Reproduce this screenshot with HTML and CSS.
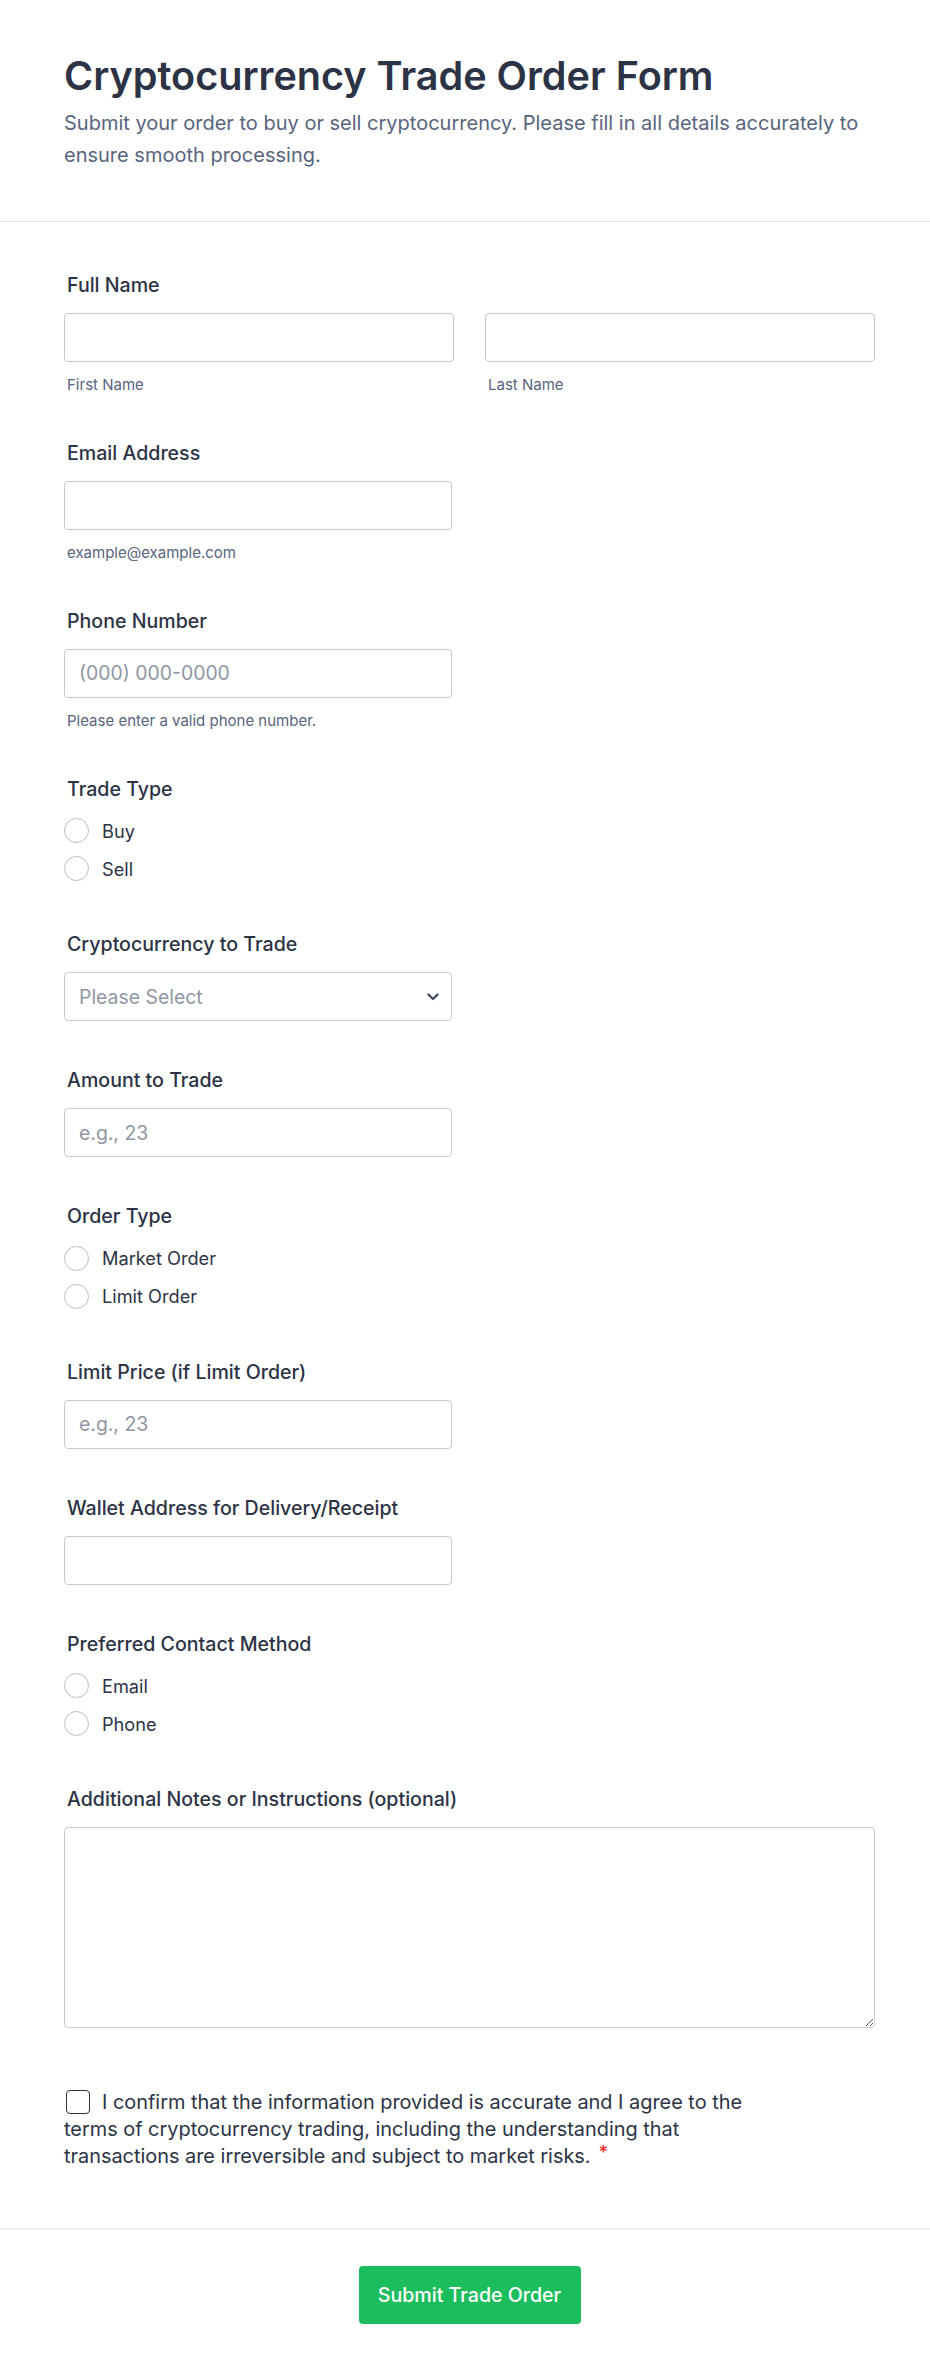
FILE: index.html
```html
<!DOCTYPE html>
<html lang="en">
<head>
<meta charset="utf-8">
<title>Cryptocurrency Trade Order Form</title>
<link rel="stylesheet" href="styles.css">
</head>
<body>
<div class="form">
  <header class="form-header">
    <h1 class="title">Cryptocurrency Trade Order Form</h1>
    <p class="subtitle">Submit your order to buy or sell cryptocurrency. Please fill in all details accurately to ensure smooth processing.</p>
  </header>

  <main class="fields">
    <div class="field">
      <label class="label">Full Name</label>
      <div class="name-row">
        <div class="name-col">
          <input class="input" type="text">
          <span class="sublabel">First Name</span>
        </div>
        <div class="name-col">
          <input class="input" type="text">
          <span class="sublabel">Last Name</span>
        </div>
      </div>
    </div>

    <div class="field">
      <label class="label">Email Address</label>
      <input class="input" type="email">
      <span class="sublabel">example@example.com</span>
    </div>

    <div class="field">
      <label class="label">Phone Number</label>
      <input class="input" type="tel" placeholder="(000) 000-0000">
      <span class="sublabel">Please enter a valid phone number.</span>
    </div>

    <div class="field">
      <label class="label">Trade Type</label>
      <div class="radio-list">
        <label class="radio-item"><input class="radio" type="radio" name="trade"><span>Buy</span></label>
        <label class="radio-item"><input class="radio" type="radio" name="trade"><span>Sell</span></label>
      </div>
    </div>

    <div class="field">
      <label class="label">Cryptocurrency to Trade</label>
      <div class="select-wrap">
        <select class="input select">
          <option>Please Select</option>
        </select>
        <svg class="chevron" width="12" height="8" viewBox="0 0 12 8" aria-hidden="true">
          <path d="M1.5 1.6 L6 6 L10.5 1.6" fill="none" stroke="#475067" stroke-width="2.4" stroke-linecap="round" stroke-linejoin="round"/>
        </svg>
      </div>
    </div>

    <div class="field">
      <label class="label">Amount to Trade</label>
      <input class="input" type="text" placeholder="e.g., 23">
    </div>

    <div class="field">
      <label class="label">Order Type</label>
      <div class="radio-list">
        <label class="radio-item"><input class="radio" type="radio" name="order"><span>Market Order</span></label>
        <label class="radio-item"><input class="radio" type="radio" name="order"><span>Limit Order</span></label>
      </div>
    </div>

    <div class="field">
      <label class="label">Limit Price (if Limit Order)</label>
      <input class="input" type="text" placeholder="e.g., 23">
    </div>

    <div class="field">
      <label class="label">Wallet Address for Delivery/Receipt</label>
      <input class="input" type="text">
    </div>

    <div class="field">
      <label class="label">Preferred Contact Method</label>
      <div class="radio-list">
        <label class="radio-item"><input class="radio" type="radio" name="contact"><span>Email</span></label>
        <label class="radio-item"><input class="radio" type="radio" name="contact"><span>Phone</span></label>
      </div>
    </div>

    <div class="field">
      <label class="label">Additional Notes or Instructions (optional)</label>
      <textarea class="input textarea"></textarea>
    </div>

    <div class="field consent">
      <label class="consent-text"><input class="checkbox" type="checkbox">I confirm that the information provided is accurate and I agree to the terms of cryptocurrency trading, including the understanding that transactions are irreversible and subject to market risks.<span class="req">*</span></label>
    </div>
  </main>

  <footer class="form-footer">
    <button class="submit" type="button">Submit Trade Order</button>
  </footer>
</div>
</body>
</html>
```

FILE: styles.css
```css
* {
  box-sizing: border-box;
}

body {
  margin: 0;
  background: #ffffff;
  font-family: Inter, "Noto Sans", "Liberation Sans", sans-serif;
  color: #2c3345;
}

.form {
  width: 930px;
  background: #ffffff;
}

.form-header {
  padding: 52px 55px 50px 64px;
  border-bottom: 1px solid #dfe1e9;
}

.title {
  margin: 0;
  font-size: 39.6px;
  line-height: 48px;
  font-weight: 600;
  color: #2c3345;
}

.subtitle {
  margin: 6.5px 0 0;
  font-size: 20px;
  line-height: 32px;
  color: #57647e;
}

.fields {
  padding: 51px 55px 58px 64px;
  display: flex;
  flex-direction: column;
  gap: 47px;
}

.field {
  display: flex;
  flex-direction: column;
  align-items: flex-start;
}

.label {
  display: block;
  padding-left: 3px;
  font-size: 19.6px;
  line-height: 24px;
  font-weight: 500;
  color: #2c3345;
  margin-bottom: 16px;
}

.input {
  display: block;
  width: 388px;
  height: 49px;
  margin: 0;
  padding: 0 14px;
  border: 1px solid #c3cad8;
  border-radius: 4px;
  background: #ffffff;
  font-family: inherit;
  font-size: 19.4px;
  color: #2c3345;
  outline: none;
}

.input::placeholder {
  color: #8f96a3;
}

.name-row {
  display: flex;
  gap: 31px;
}

.name-col {
  width: 390px;
}

.name-col .input {
  width: 100%;
}

.sublabel {
  display: block;
  margin-top: 14px;
  padding-left: 3px;
  font-size: 15px;
  line-height: 18px;
  color: #57647e;
}

.radio-list {
  display: flex;
  flex-direction: column;
  gap: 13px;
  margin-top: 1.5px;
  padding-bottom: 4px;
}

.radio-item {
  display: flex;
  align-items: center;
  gap: 13px;
  height: 25px;
  font-size: 18.2px;
  color: #2c3345;
}

.radio {
  appearance: none;
  -webkit-appearance: none;
  flex: none;
  margin: 0;
  width: 25px;
  height: 25px;
  border: 1px solid #b8bdc9;
  border-radius: 50%;
  background: #ffffff;
}

.select-wrap {
  position: relative;
  width: 388px;
}

.select {
  appearance: none;
  -webkit-appearance: none;
  color: #8f96a3;
  padding-right: 36px;
}

.chevron {
  position: absolute;
  right: 13px;
  top: 21px;
  pointer-events: none;
}

.textarea {
  width: 100%;
  height: 201px;
  padding: 12px 14px;
  resize: both;
}

.consent {
  margin-top: 13.5px;
}

.consent-text {
  display: block;
  max-width: 700px;
  font-size: 19.9px;
  line-height: 27px;
  color: #2c3345;
}

.checkbox {
  appearance: none;
  -webkit-appearance: none;
  display: inline-block;
  vertical-align: top;
  width: 24px;
  height: 24px;
  margin: 1px 12px 0 2px;
  border: 1.5px solid #2c3345;
  border-radius: 4px;
  background: #ffffff;
}

.req {
  display: inline-block;
  margin-left: 8px;
  font-size: 18px;
  line-height: 18px;
  font-weight: 600;
  vertical-align: top;
  padding-top: 1px;
  color: #f23a3c;
}

.form-footer {
  border-top: 2px solid #eeeff4;
  padding: 36px 55px 50px 64px;
  display: flex;
  justify-content: center;
}

.submit {
  width: 222px;
  height: 58px;
  border: none;
  border-radius: 4px;
  background: #1cbd5d;
  color: #ffffff;
  font-family: inherit;
  font-size: 19.6px;
  font-weight: 500;
  cursor: pointer;
}
```
